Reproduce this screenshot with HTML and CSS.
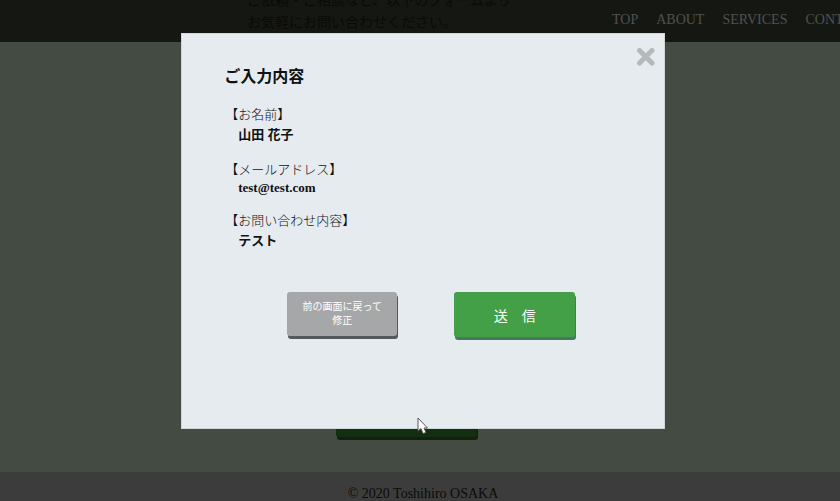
FILE: index.html
```html
<!DOCTYPE html>
<html lang="ja">
<head>
<meta charset="utf-8">
<title>Contact</title>
<link rel="stylesheet" href="styles.css">
</head>
<body>
<header class="site-header">
  <nav class="site-nav">
    <a href="#top">TOP</a>
    <a href="#about">ABOUT</a>
    <a href="#services">SERVICES</a>
    <a href="#contact">CONTACT</a>
  </nav>
</header>
<main class="page">
  <p class="intro">ご依頼・ご相談など、以下のフォームより<br>お気軽にお問い合わせください。</p>
  <button class="confirm" type="button" aria-label="確認"></button>
</main>
<footer class="site-footer">© 2020 Toshihiro OSAKA</footer>

<div class="overlay">
  <section class="modal" role="dialog" aria-labelledby="modal-title">
    <button class="close" type="button" aria-label="閉じる">
      <svg viewBox="0 0 20 20" width="20" height="20"><path d="M3.500 3.500 16 16M16 3.500 3.500 16"/></svg>
    </button>
    <h2 class="modal-title" id="modal-title">ご入力内容</h2>
    <dl class="entries">
      <div class="entry"><dt>【お名前】</dt><dd>山田 花子</dd></div>
      <div class="entry"><dt>【メールアドレス】</dt><dd class="latin">test@test.com</dd></div>
      <div class="entry"><dt>【お問い合わせ内容】</dt><dd>テスト</dd></div>
    </dl>
    <div class="actions">
      <button class="btn btn-back" type="button">前の画面に戻って<br>修正</button>
      <button class="btn btn-send" type="submit">送　信</button>
    </div>
  </section>
</div>
<svg class="cursor" viewBox="0 0 12 18" width="12" height="18" aria-hidden="true"><path d="M1 1V14L4 11.500 6 16.500 9 15.500 7 11H10.500Z"/></svg>
</body>
</html>
```
FILE: styles.css
```css
* {
  box-sizing: border-box;
}

body {
  margin: 0;
  height: 100vh;
  display: flex;
  flex-direction: column;
  overflow: hidden;
  background: #444b42;
  color: #0a0b09;
  font-family: "Liberation Serif", "Noto Sans CJK JP", serif;
  font-size: 14px;
}

button {
  border: 0;
  padding: 0;
  font-family: inherit;
  cursor: pointer;
}

.site-header {
  position: absolute;
  inset: 0 0 auto;
  padding: 9px 0 12px;
  background: #151713;
  overflow: hidden;
}

.site-nav {
  display: flex;
  gap: 18px;
  margin-left: calc(100% - 228px);
  line-height: 21px;
}

.site-nav a {
  color: #50524f;
  text-decoration: none;
}

.page {
  flex: 1;
  display: flex;
  flex-direction: column;
  padding: 0 0 32px 247px;
}

.intro {
  position: relative;
  margin: -10px 0 0;
  line-height: 22px;
}

.confirm {
  width: 141px;
  height: 42px;
  margin: auto 0 3px 89px;
  border-radius: 3px;
  background: #122f12;
  box-shadow: 1px 3px 0 #10220f;
}

.site-footer {
  padding: 12px 0 0 6px;
  height: 29px;
  line-height: 20px;
  background: #3c3c3c;
  text-align: center;
}

.overlay {
  position: fixed;
  inset: 0;
  display: grid;
  grid-template-columns: 58%;
  justify-content: center;
  align-items: start;
  padding: 33px 0 0 6px;
}

.modal {
  position: relative;
  padding: 31px 42px 91px;
  background: #e6ebef;
  border: 1px solid #d0d5d7;
  color: #101213;
}

.close {
  position: absolute;
  top: 13px;
  right: 8px;
  width: 20px;
  height: 20px;
  background: none;
}

.close svg {
  display: block;
  fill: none;
  stroke: #b4baba;
  stroke-width: 5;
  stroke-linecap: round;
}

.modal-title {
  margin: 0 0 16px;
  font-size: 16px;
  line-height: 24px;
}

.entries {
  margin: 0;
  font-size: 13px;
  line-height: 20px;
}

.entry {
  margin-bottom: 15px;
}

.entry dt {
  padding-left: 1px;
  font-weight: 300;
}

.entry dd {
  margin: 0 0 0 14px;
  font-weight: 700;
}

.entry .latin {
  line-height: 16px;
}

.actions {
  display: flex;
  align-items: flex-start;
  gap: 57px;
  margin: 41px 0 0 63px;
}

.btn {
  border-radius: 3px;
  color: #fff;
}

.btn-back {
  width: 110px;
  height: 44px;
  background: #a5a7a9;
  box-shadow: 1px 3px 0 #55585b;
  font-size: 10px;
  line-height: 14px;
}

.btn-send {
  width: 121px;
  height: 45px;
  background: #43a047;
  box-shadow: 1px 3px 0 #457a5e;
  font-size: 14px;
}

.cursor {
  position: absolute;
  left: 417px;
  top: 417px;
  fill: #fff;
  stroke: #555;
}
```
